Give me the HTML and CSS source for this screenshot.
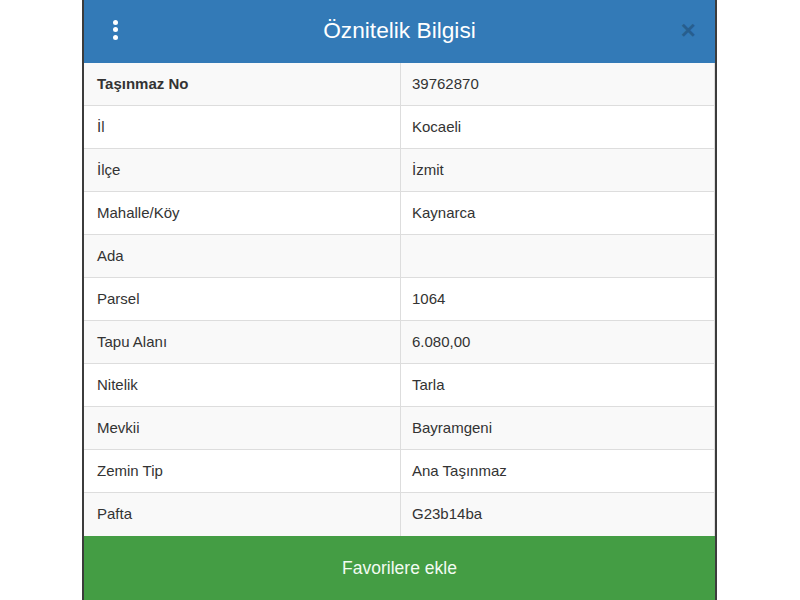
FILE: index.html
```html
<!DOCTYPE html>
<html lang="tr">
<head>
<meta charset="utf-8">
<title>Öznitelik Bilgisi</title>
<link rel="stylesheet" href="styles.css">
</head>
<body>
<div class="panel">
  <div class="header">
    <span class="menu"><span class="dot"></span><span class="dot"></span><span class="dot"></span></span>
    <h1 class="title">Öznitelik Bilgisi</h1>
    <span class="close">×</span>
  </div>
  <div class="table">
    <div class="row"><div class="cell key bold">Taşınmaz No</div><div class="cell">39762870</div></div>
    <div class="row"><div class="cell key">İl</div><div class="cell">Kocaeli</div></div>
    <div class="row"><div class="cell key">İlçe</div><div class="cell">İzmit</div></div>
    <div class="row"><div class="cell key">Mahalle/Köy</div><div class="cell">Kaynarca</div></div>
    <div class="row"><div class="cell key">Ada</div><div class="cell"></div></div>
    <div class="row"><div class="cell key">Parsel</div><div class="cell">1064</div></div>
    <div class="row"><div class="cell key">Tapu Alanı</div><div class="cell">6.080,00</div></div>
    <div class="row"><div class="cell key">Nitelik</div><div class="cell">Tarla</div></div>
    <div class="row"><div class="cell key">Mevkii</div><div class="cell">Bayramgeni</div></div>
    <div class="row"><div class="cell key">Zemin Tip</div><div class="cell">Ana Taşınmaz</div></div>
    <div class="row"><div class="cell key">Pafta</div><div class="cell">G23b14ba</div></div>
  </div>
  <button class="fav">Favorilere ekle</button>
</div>
</body>
</html>
```
FILE: styles.css
```css
html, body {
  margin: 0;
  padding: 0;
  background: #fff;
  height: 100%;
  overflow: hidden;
}
body {
  font-family: "Liberation Sans", Arial, sans-serif;
  color: #333;
}
.panel {
  margin-left: 82px;
  width: 631px;
  height: 600px;
  border-left: 2px solid #3c3c3c;
  border-right: 2px solid #3c3c3c;
  display: flex;
  flex-direction: column;
}
.header {
  height: 63px;
  background: #337ab7;
  display: grid;
  grid-template-columns: 1fr auto 1fr;
  align-items: center;
  flex: none;
}
.menu {
  display: flex;
  flex-direction: column;
  gap: 2.5px;
  margin-left: 29px;
  margin-top: -4px;
  justify-self: start;
}
.dot {
  width: 5px;
  height: 5px;
  border-radius: 50%;
  background: #fff;
}
.title {
  margin: -2px 0 0 0;
  text-align: center;
  font-size: 22.7px;
  font-weight: normal;
  color: #fff;
}
.close {
  justify-self: end;
  font-size: 26px;
  font-weight: bold;
  color: #000;
  opacity: 0.22;
  margin-right: 19px;
  margin-top: -3px;
  line-height: 1;
}
.table {
  display: flex;
  flex-direction: column;
  flex: none;
  border-right: 1px solid #ddd;
}
.row {
  display: grid;
  grid-template-columns: 317px 1fr;
  height: 42px;
  border-bottom: 1px solid #ddd;
}
.row:nth-child(odd) {
  background: #f9f9f9;
}
.row:last-child {
  border-bottom: none;
  height: 43px;
}
.cell {
  display: flex;
  align-items: center;
  padding-left: 11px;
  padding-bottom: 2px;
  font-size: 15px;
  color: #333;
}
.key {
  padding-left: 13px;
  border-right: 1px solid #ddd;
}
.bold {
  font-weight: bold;
}
.fav {
  flex: none;
  height: 65px;
  border: none;
  background: #449d44;
  color: #f2fbf2;
  font-family: "Liberation Sans", Arial, sans-serif;
  font-size: 17.5px;
  padding: 0;
  width: 100%;
}
```
